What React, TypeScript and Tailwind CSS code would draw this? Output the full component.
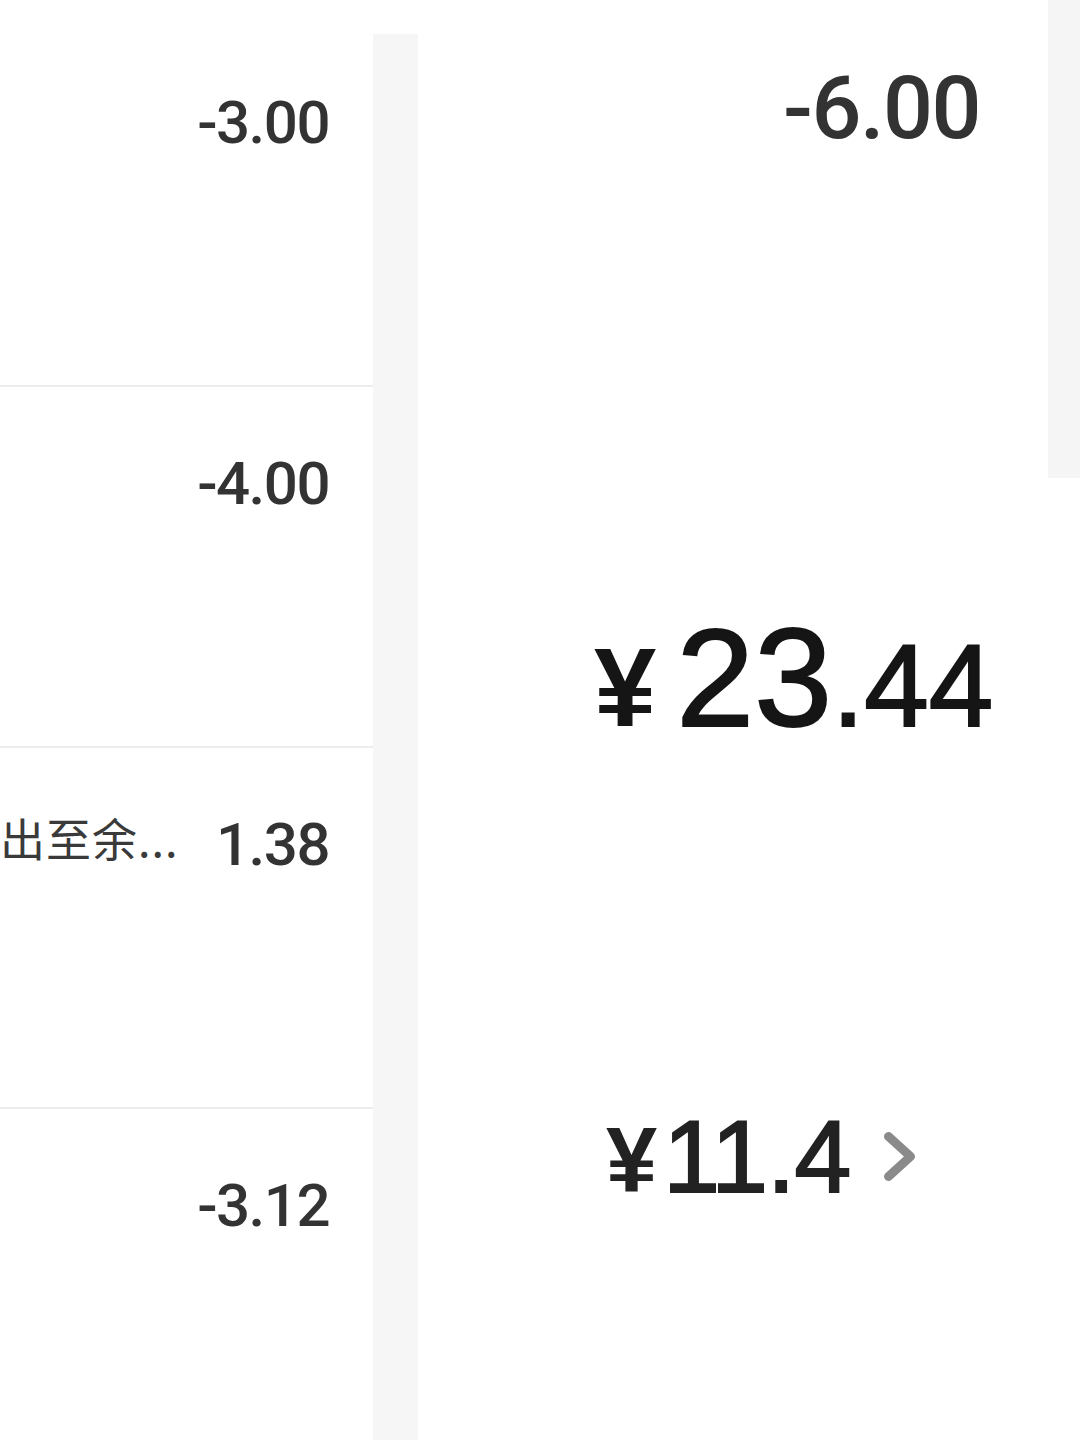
import { ReactNode } from 'react';

const num = "font-['Roboto','DejaVu_Sans',sans-serif] font-medium text-[#333333] leading-none tracking-[-1.5px]";

const Row = ({ children, last }: { children: ReactNode; last?: boolean }) => (
  <div
    className={`h-[361px] box-border pt-[67px] pr-[44px] flex items-start ${
      last ? '' : 'border-b-2 border-[#ededed]'
    }`}
  >
    {children}
  </div>
);

export default function App() {
  return (
    <div className="w-[1080px] h-[1440px] overflow-hidden bg-white flex">
      {/* Bill list */}
      <div className="w-[373px] shrink-0 pt-[26px]">
        <Row>
          <span className={`ml-auto text-[60px] ${num}`}>-3.00</span>
        </Row>
        <Row>
          <span className={`ml-auto text-[60px] ${num}`}>-4.00</span>
        </Row>
        <Row>
          <span className="whitespace-nowrap text-[45px] leading-none text-[#3a3a3a] tracking-[1px] font-['Noto_Sans_CJK_SC','Noto_Sans',sans-serif]">
            出至余...
          </span>
          <span className={`ml-auto text-[60px] ${num}`}>1.38</span>
        </Row>
        <Row last>
          <span className={`ml-auto text-[60px] ${num}`}>-3.12</span>
        </Row>
      </div>

      {/* Gap strip */}
      <div className="w-[45px] shrink-0 flex flex-col">
        <div className="h-[34px] bg-white" />
        <div className="flex-1 bg-[#f6f6f6]" />
      </div>

      {/* Balance panel */}
      <div className="w-[630px] shrink-0 flex flex-col pt-[64px]">
        <div className="flex justify-end pr-[68px]">
          <span className={`text-[88px] ${num}`}>-6.00</span>
        </div>

        <div className="mt-[456px] pl-[176px] flex items-baseline text-[#151515] font-['Liberation_Sans',Arial,sans-serif]">
          <span className="text-[112px] leading-none font-bold">¥</span>
          <span className="ml-[20px] text-[140px] leading-none [-webkit-text-stroke:2px_#151515]">23</span>
          <span className="text-[116px] leading-none [-webkit-text-stroke:2px_#151515]">.44</span>
        </div>

        <div className="mt-[358px] pl-[188px] flex items-baseline text-[#222222] font-['Liberation_Sans',Arial,sans-serif]">
          <span className="text-[92px] leading-none font-bold">¥</span>
          <span className="ml-[6px] text-[102px] leading-none tracking-[-1px] [-webkit-text-stroke:2px_#222222]">11.4</span>
          <svg width="32" height="60" viewBox="0 0 32 60" className="ml-[34px]">
            <path
              d="M4.5 4.5 L26.5 24.5 L4.5 44.5"
              fill="none"
              stroke="#8a8a8a"
              strokeWidth="9"
              strokeLinecap="round"
              strokeLinejoin="round"
            />
          </svg>
        </div>
      </div>

      {/* Right edge strip */}
      <div className="w-[32px] shrink-0">
        <div className="h-[478px] bg-[#f5f5f5]" />
      </div>
    </div>
  );
}
